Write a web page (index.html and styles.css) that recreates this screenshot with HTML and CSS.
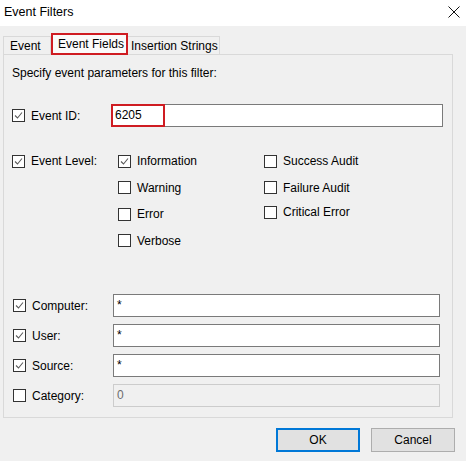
FILE: index.html
```html
<!DOCTYPE html>
<html>
<head>
<meta charset="utf-8">
<title>Event Filters</title>
<link rel="stylesheet" href="styles.css">
</head>
<body>
<div class="window">
  <div class="titlebar">
    <span class="title">Event Filters</span>
    <svg class="close" width="12" height="12" viewBox="0 0 12 12"><path d="M0.5 0.5 L11.5 11.5 M11.5 0.5 L0.5 11.5" stroke="#111" stroke-width="1" fill="none"/></svg>
  </div>
  <div class="content">
    <div class="tabs">
      <div class="tab">Event</div>
      <div class="tab selected">Event Fields</div>
      <div class="tab">Insertion Strings</div>
    </div>
    <div class="panel">
      <div class="intro">Specify event parameters for this filter:</div>

      <div class="row row-id">
        <label class="lbl"><span class="cb checked"><svg viewBox="0 0 11 11"><path d="M2 5.5 L4.5 8 L9 2.5" stroke="#5a5a5a" stroke-width="1.1" fill="none"/></svg></span>Event ID:</label>
        <div class="field field-id"><span class="idval">6205</span></div>
      </div>

      <div class="row row-level">
        <label class="lbl"><span class="cb checked"><svg viewBox="0 0 11 11"><path d="M2 5.5 L4.5 8 L9 2.5" stroke="#5a5a5a" stroke-width="1.1" fill="none"/></svg></span>Event Level:</label>
        <div class="levels">
          <div class="lvl"><span class="cb checked"><svg viewBox="0 0 11 11"><path d="M2 5.5 L4.5 8 L9 2.5" stroke="#5a5a5a" stroke-width="1.1" fill="none"/></svg></span>Information</div>
          <div class="lvl"><span class="cb"></span>Success Audit</div>
          <div class="lvl"><span class="cb"></span>Warning</div>
          <div class="lvl"><span class="cb"></span>Failure Audit</div>
          <div class="lvl"><span class="cb"></span>Error</div>
          <div class="lvl lvl-up"><span class="cb"></span>Critical Error</div>
          <div class="lvl"><span class="cb"></span>Verbose</div>
        </div>
      </div>

      <div class="fields">
        <div class="frow">
          <label class="lbl lbl2"><span class="cb checked"><svg viewBox="0 0 11 11"><path d="M2 5.5 L4.5 8 L9 2.5" stroke="#5a5a5a" stroke-width="1.1" fill="none"/></svg></span>Computer:</label>
          <div class="field field-wide">*</div>
        </div>
        <div class="frow">
          <label class="lbl lbl2"><span class="cb checked"><svg viewBox="0 0 11 11"><path d="M2 5.5 L4.5 8 L9 2.5" stroke="#5a5a5a" stroke-width="1.1" fill="none"/></svg></span>User:</label>
          <div class="field field-wide">*</div>
        </div>
        <div class="frow">
          <label class="lbl lbl2"><span class="cb checked"><svg viewBox="0 0 11 11"><path d="M2 5.5 L4.5 8 L9 2.5" stroke="#5a5a5a" stroke-width="1.1" fill="none"/></svg></span>Source:</label>
          <div class="field field-wide">*</div>
        </div>
        <div class="frow">
          <label class="lbl lbl2"><span class="cb"></span>Category:</label>
          <div class="field field-wide disabled">0</div>
        </div>
      </div>
    </div>
    <div class="footer">
      <button class="btn default">OK</button>
      <button class="btn">Cancel</button>
    </div>
  </div>
</div>
</body>
</html>
```

FILE: styles.css
```css
html, body {
  margin: 0;
  padding: 0;
  background: #f0f0f0;
}
body {
  font-family: "Liberation Sans", Arial, sans-serif;
  font-size: 12px;
  color: #000;
}
.window {
  width: 466px;
  height: 461px;
  background: #f0f0f0;
  overflow: hidden;
}
.titlebar {
  height: 26px;
  background: #fff;
  display: flex;
  align-items: center;
  justify-content: space-between;
  padding: 0 6px 0 4px;
}
.title {
  font-size: 12.5px;
  margin-top: -2px;
}
.close {
  display: block;
  margin-top: -3px;
}
.content {
  padding: 7px 0 0 3px;
}
.tabs {
  display: flex;
  align-items: flex-end;
  height: 21px;
}
.tab {
  height: 18px;
  line-height: 18px;
  box-sizing: border-box;
  border: 1px solid #d9d9d9;
  border-bottom: none;
  background: #f0f0f0;
  padding: 0 6px;
  white-space: nowrap;
  overflow: hidden;
}
.tab:first-child {
  width: 48px;
  padding-left: 6px;
}
.tab.selected {
  height: 22px;
  line-height: 19px;
  width: 77px;
  margin-bottom: -1px;
  background: #fafafa;
  border: 2px solid #cf1c22;
  padding: 0 0 0 5px;
  position: relative;
  z-index: 1;
}
.tab:last-child {
  width: 92px;
  padding: 0 0 0 3px;
  border-left: none;
}
.panel {
  width: 450px;
  height: 364px;
  box-sizing: border-box;
  border: 1px solid #d9d9d9;
  background: #f0f0f0;
  padding: 0 0 0 8px;
}
.intro {
  margin-top: 10px;
  line-height: 16px;
}
.row {
  display: flex;
}
.row-id {
  margin-top: 23px;
  align-items: center;
  height: 23px;
}
.lbl {
  width: 99px;
  display: flex;
  align-items: center;
  flex-shrink: 0;
}
.cb {
  width: 13px;
  height: 13px;
  box-sizing: border-box;
  border: 1px solid #333;
  background: #fff;
  display: inline-flex;
  align-items: center;
  justify-content: center;
  margin-right: 6px;
  flex-shrink: 0;
}
.cb svg {
  width: 11px;
  height: 11px;
  display: block;
}
.field {
  height: 23px;
  box-sizing: border-box;
  border: 1px solid #7a7a7a;
  background: #fff;
  line-height: 17px;
  padding: 2px 3px;
}
.field-id {
  width: 332px;
  padding: 0;
  border: none;
  border-top: 1px solid #7a7a7a;
  border-right: 1px solid #7a7a7a;
  border-bottom: 1px solid #7a7a7a;
}
.idval {
  display: block;
  width: 54px;
  height: 23px;
  margin-top: -1px;
  box-sizing: border-box;
  border: 2px solid #cf1c22;
  padding: 1px 0 0 2px;
  line-height: 17px;
}
.row-level {
  margin-top: 21px;
  align-items: flex-start;
}
.row-level .lbl {
  height: 26px;
}
.levels {
  margin-left: 7px;
  display: grid;
  grid-template-columns: 146px 150px;
  grid-auto-rows: 26.5px;
}
.lvl {
  display: flex;
  align-items: center;
  height: 26px;
}
.lvl-up {
  margin-top: -2px;
}
.fields {
  margin-top: 40px;
  display: flex;
  flex-direction: column;
  gap: 7px;
}
.frow {
  display: flex;
  align-items: center;
  height: 23px;
  padding-left: 1px;
}
.lbl2 {
  width: 100px;
}
.field-wide {
  width: 327px;
}
.field.disabled {
  border-color: #cccccc;
  background: #f0f0f0;
  color: #6d6d6d;
}
.footer {
  display: flex;
  justify-content: flex-end;
  gap: 11px;
  margin-top: 10px;
  padding-right: 11px;
}
.btn {
  width: 84px;
  height: 24px;
  box-sizing: border-box;
  border: 1px solid #adadad;
  background: #e1e1e1;
  font-family: "Liberation Sans", Arial, sans-serif;
  font-size: 12px;
  color: #000;
  padding: 0;
}
.btn.default {
  border: 2px solid #0078d7;
}
```
